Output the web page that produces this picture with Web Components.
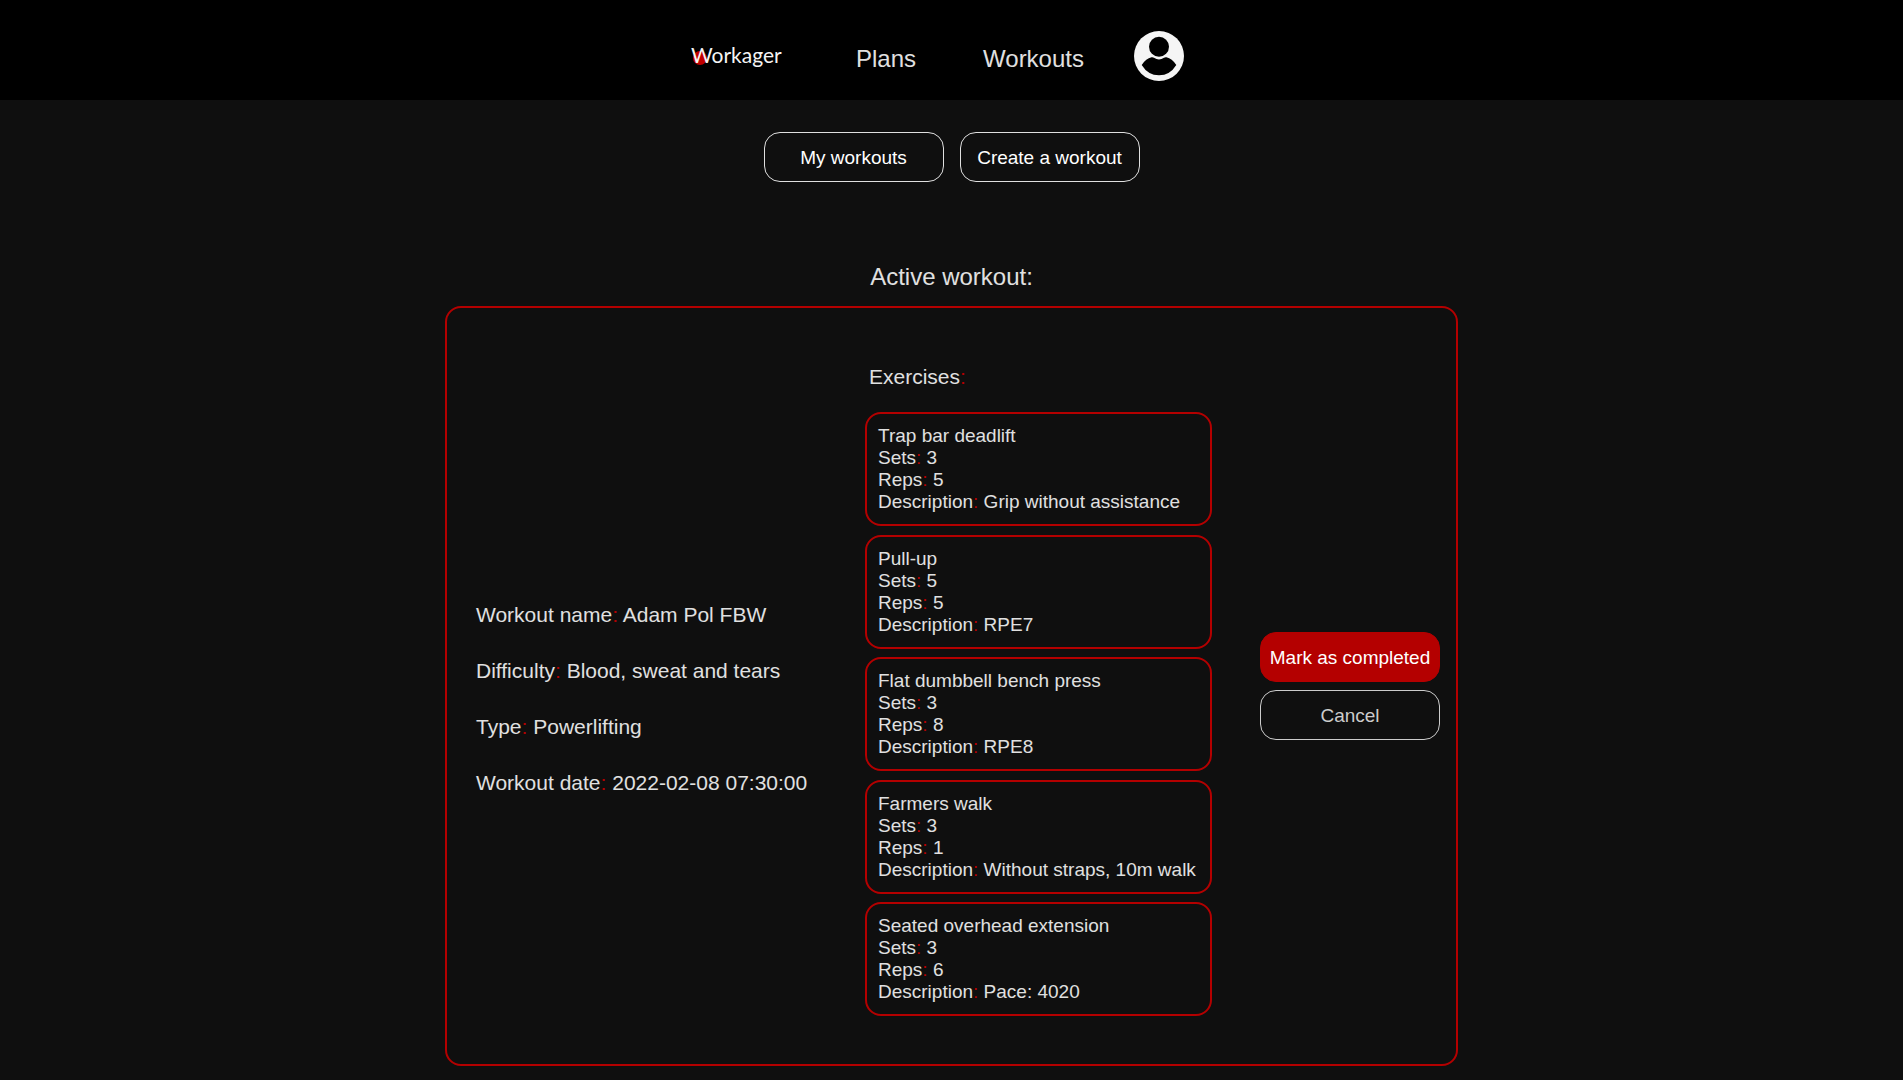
<!DOCTYPE html>
<html lang="en">
<head>
<meta charset="utf-8">
<title>Workager</title>
<style>
html{background:#0f0f0f}
body{margin:0;color:#e0e0e0;font-family:"Liberation Sans",Arial,sans-serif;--red:#b40000;--light:#e0e0e0}
main{display:flex;flex-direction:column;align-items:center;padding:32px 16px 14px}
h1{margin:81px 0 15px;font-size:24px;line-height:28px;font-weight:400}
</style>
</head>
<body>
<app-header></app-header>
<main>
<work-tabs></work-tabs>
<h1>Active workout:</h1>
<workout-panel>
<labelled-value slot="details" label="Workout name">Adam Pol FBW</labelled-value>
<labelled-value slot="details" label="Difficulty">Blood, sweat and tears</labelled-value>
<labelled-value slot="details" label="Type">Powerlifting</labelled-value>
<labelled-value slot="details" label="Workout date">2022-02-08 07:30:00</labelled-value>
<exercise-card name="Trap bar deadlift" sets="3" reps="5">Grip without assistance</exercise-card>
<exercise-card name="Pull-up" sets="5" reps="5">RPE7</exercise-card>
<exercise-card name="Flat dumbbell bench press" sets="3" reps="8">RPE8</exercise-card>
<exercise-card name="Farmers walk" sets="3" reps="1">Without straps, 10m walk</exercise-card>
<exercise-card name="Seated overhead extension" sets="3" reps="6">Pace: 4020</exercise-card>
<pill-button slot="actions" kind="primary">Mark as completed</pill-button>
<pill-button slot="actions" kind="muted">Cancel</pill-button>
</workout-panel>
</main>
<script>
const define = (name, render) => customElements.define(name, class extends HTMLElement {
  constructor() {
    super();
    this.attachShadow({ mode: 'open' });
  }
  connectedCallback() {
    this.shadowRoot.innerHTML = render(this);
  }
});

define('brand-logo', () => `
<style>
:host{display:block}
a{display:block}
svg{display:block;width:96px;height:40px;overflow:visible}
text{font-family:Lato,sans-serif;font-size:21px}
</style>
<a href="#" aria-label="Workager home"><svg viewBox="0 0 96 40">
<circle cx="11" cy="28" r="7" fill="#c00000"/>
<text x="2" y="33" fill="#f5f5f5">Workager</text>
</svg></a>`);

define('app-header', () => `
<style>
:host{display:block;background:#000}
nav{display:flex;justify-content:center;align-items:center;height:100px;padding-right:30px}
a{color:inherit;text-decoration:none;font-size:24px;line-height:28px}
.plans{margin:18px 67px 0 71px}
.workouts{margin:18px 50px 0 0}
.user{padding:0;border:0;background:none;margin-top:12px}
.user svg{display:block;width:50px;height:50px}
</style>
<nav>
<brand-logo></brand-logo>
<a class="plans" href="#">Plans</a>
<a class="workouts" href="#">Workouts</a>
<button class="user" aria-label="Account"><svg viewBox="0 0 50 50">
<circle cx="25" cy="25" r="25" fill="#f5f5f5"/>
<circle cx="25" cy="15.700" r="10" fill="#000"/>
<path d="M7.700 34Q12 27.500 17.500 26.300Q19 26 20 26.800Q25 30.200 30 26.800Q31 26 32.500 26.300Q38 27.500 42.300 34Q36 44.300 25 44.300Q14 44.300 7.700 34Z" fill="#000"/>
</svg></button>
</nav>`);

define('pill-button', () => `
<style>
:host{display:block}
button{display:block;width:180px;height:50px;padding:2px 0 0;border:1px solid var(--light);border-radius:16px;background:none;color:#fff;font:19px/22px "Liberation Sans",Arial,sans-serif;white-space:nowrap}
:host([kind=primary]) button{background:var(--red);border-color:var(--red)}
:host([kind=muted]) button{color:#ccc;border-color:#ccc}
</style>
<button type="button"><slot></slot></button>`);

define('work-tabs', () => `
<style>:host{display:flex;gap:16px}</style>
<pill-button>My workouts</pill-button>
<pill-button>Create a workout</pill-button>`);

define('labelled-value', el => `
<style>:host{display:block}b{font-weight:400;color:var(--red)}</style>${el.getAttribute('label')}<b>:</b> <slot></slot>`);

define('exercise-card', el => `
<style>
:host{display:block;padding:11px;border:2px solid var(--red);border-radius:16px;font-size:19px;line-height:22px}
</style>
<div>${el.getAttribute('name')}</div>
<labelled-value label="Sets">${el.getAttribute('sets')}</labelled-value>
<labelled-value label="Reps">${el.getAttribute('reps')}</labelled-value>
<labelled-value label="Description">${el.textContent}</labelled-value>`);

define('workout-panel', () => `
<style>
:host{box-sizing:border-box;display:flex;align-items:center;width:100%;max-width:1013px;padding:48px 16px 48px 29px;border:2px solid var(--red);border-radius:16px}
.details{flex:1;font-size:21px;line-height:24px}
.details ::slotted(*){padding:29px 0 3px}
section{flex:0 1 347px}
h2{margin:0;padding:9px 4px 23px;font-size:21px;line-height:24px;font-weight:400}
h2 b{font-weight:400;color:var(--red)}
.list{display:flex;flex-direction:column;justify-content:space-between;gap:8px;min-height:604px}
.actions{display:flex;flex-direction:column;gap:8px;margin-left:48px}
</style>
<div class="details"><slot name="details"></slot></div>
<section><h2>Exercises<b>:</b></h2><div class="list"><slot></slot></div></section>
<div class="actions"><slot name="actions"></slot></div>`);
</script>
</body>
</html>
